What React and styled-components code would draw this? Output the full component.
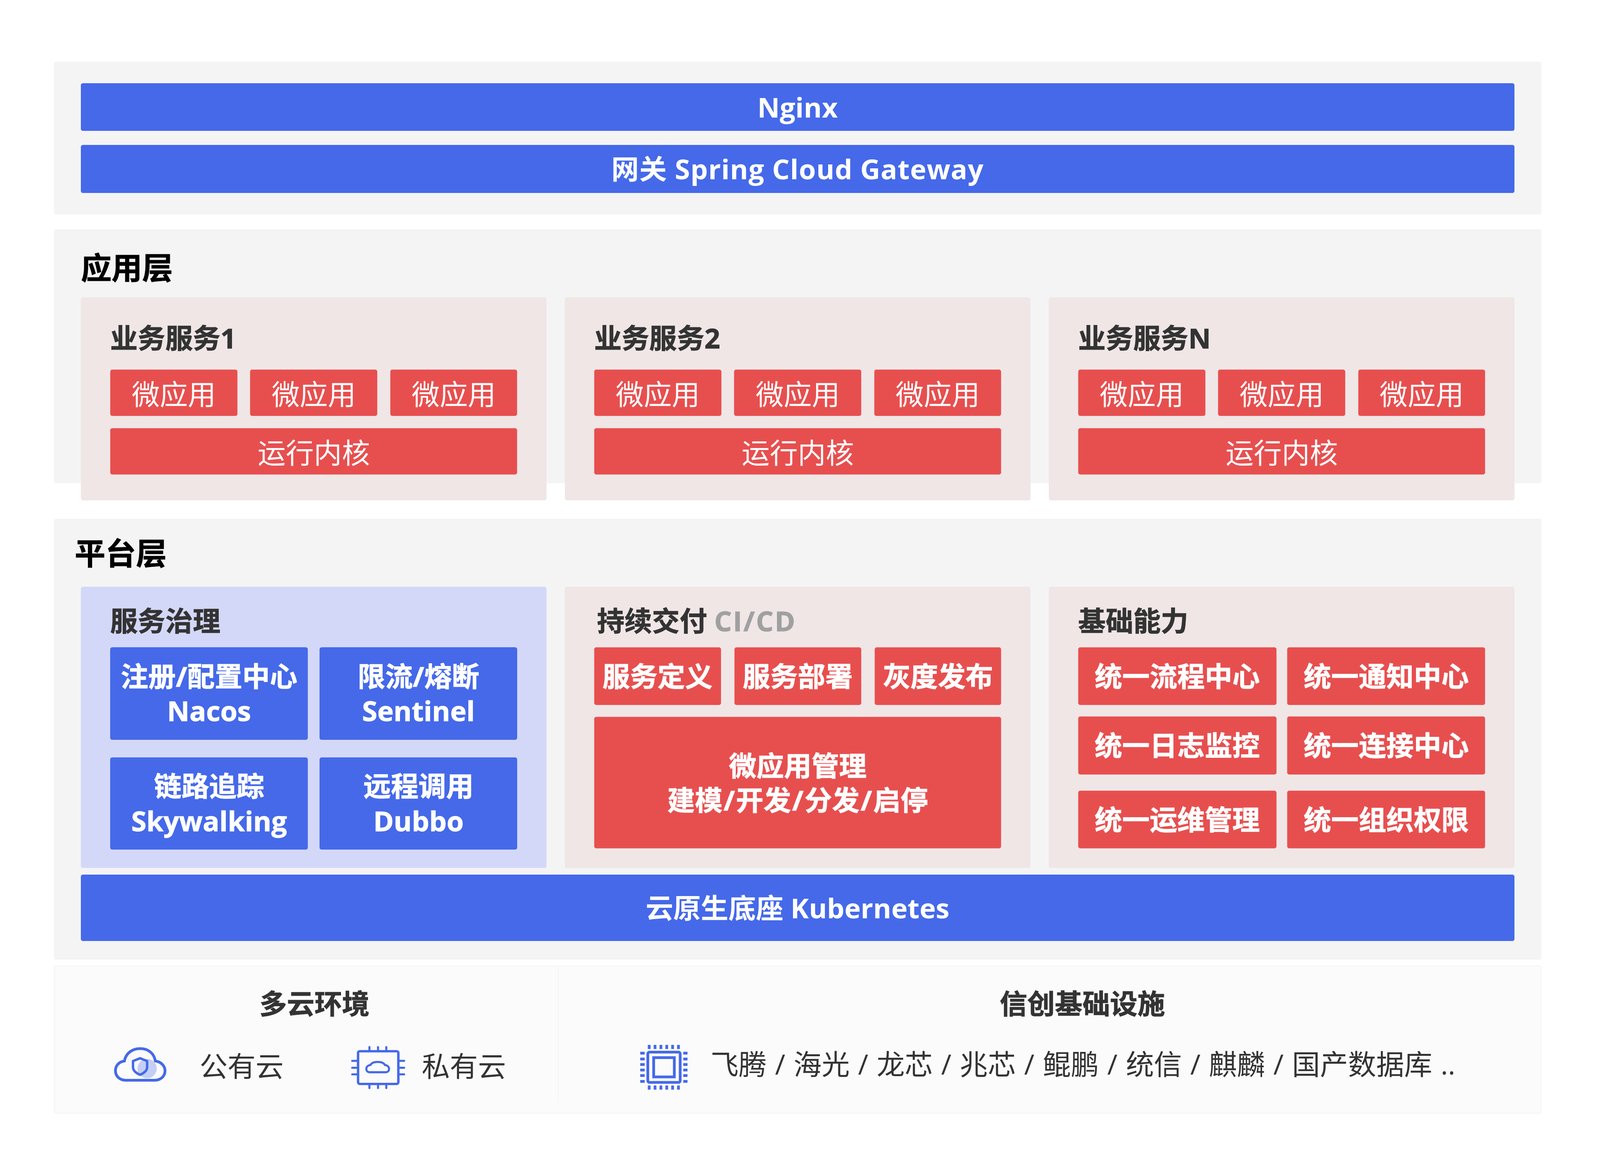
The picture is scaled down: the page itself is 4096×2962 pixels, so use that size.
import React from "react";
import styled, { createGlobalStyle } from "styled-components";

// reference was measured at 4646 wide, the window is 4096
const u = (n) => `${(n * 0.8816).toFixed(2)}px`;

const BLUE = "#4569e9";
const RED = "#e74f4f";
const FONT = `"Open Sans", "Noto Sans CJK SC", sans-serif`;

const GlobalStyle = createGlobalStyle`
  html, body {
    margin: 0;
    padding: 0;
    background: #ffffff;
  }
  * {
    box-sizing: border-box;
  }
`;

function CloudShieldIcon() {
  return (
    <IconSvg $w={152} $h={100} viewBox="0 0 152 100" fill="none">
      <circle cx="96" cy="62" r="28" fill={BLUE} opacity="0.3" />
      <path
        d="M36 96C16 96 4 84 4 68C4 54 14 42 30 40C34 18 52 4 76 4C100 4 116 18 120 40C136 42 148 54 148 68C148 84 136 96 116 96Z"
        stroke={BLUE}
        strokeWidth="8"
      />
      <path d="M75.5 32L96 40V58C96 68 86 76 75.5 80C65 76 55 68 55 58V40Z" stroke={BLUE} strokeWidth="7" strokeLinejoin="round" />
    </IconSvg>
  );
}

function CloudChipIcon() {
  return (
    <IconSvg $w={157} $h={125} $drop={18} viewBox="0 0 157 125" fill="none">
      <rect x="20" y="15" width="117" height="95" rx="5" stroke={BLUE} strokeWidth="7" />
      <path
        d="M54 76C47 76 44 71 44 66C44 60 49 56 56 55C59 49 67 46 77 46C87 46 95 49 98 55C105 56 110 60 110 66C110 71 107 76 100 76Z"
        stroke={BLUE}
        strokeWidth="6"
      />
      <g stroke={BLUE} strokeWidth="6" strokeLinecap="round">
        {[53, 78, 102].map((x) => (
          <path key={x} d={`M${x} 3V12M${x} 113V122`} />
        ))}
        {[43, 63, 82].map((y) => (
          <path key={y} d={`M3 ${y}H16M141 ${y}H154`} />
        ))}
      </g>
    </IconSvg>
  );
}

function CpuIcon() {
  const across = [26, 43, 60, 77, 94, 111];
  const down = [24, 41, 57, 73, 89, 106];
  return (
    <IconSvg $w={137} $h={130} $drop={16} viewBox="0 0 137 130" fill="none">
      <rect x="22" y="21" width="94" height="88" rx="5" stroke={BLUE} strokeWidth="8" />
      <rect x="39" y="37" width="60" height="56" stroke={BLUE} strokeWidth="8" />
      <g fill={BLUE}>
        {across.map((x) => (
          <React.Fragment key={x}>
            <rect x={x - 4} y="0" width="8" height="12" />
            <rect x={x - 4} y="118" width="8" height="12" />
          </React.Fragment>
        ))}
        {down.map((y) => (
          <React.Fragment key={y}>
            <rect x="0" y={y - 4} width="13" height="8" />
            <rect x="125" y={y - 4} width="13" height="8" />
          </React.Fragment>
        ))}
      </g>
    </IconSvg>
  );
}

function ServiceCard({ title }) {
  return (
    <AppCard>
      <AppCardTitle>{title}</AppCardTitle>
      <AppRow>
        <ThinTile>微应用</ThinTile>
        <ThinTile>微应用</ThinTile>
        <ThinTile>微应用</ThinTile>
      </AppRow>
      <ThinTile>运行内核</ThinTile>
    </AppCard>
  );
}

export default function App() {
  return (
    <Page>
      <GlobalStyle />

      <GatewaySection>
        <Bar $h={138}>Nginx</Bar>
        <Bar $h={139} $track={1.2}>网关 Spring Cloud Gateway</Bar>
      </GatewaySection>

      <AppSection>
        <LayerTitle $below={42}>应用层</LayerTitle>
        <CardRow>
          <ServiceCard title="业务服务1" />
          <ServiceCard title="业务服务2" />
          <ServiceCard title="业务服务N" />
        </CardRow>
      </AppSection>

      <PlatformSection>
        <LayerTitle $indent={-18} $below={54}>平台层</LayerTitle>
        <CardRow>
          <PlatformCard $tint="#d4d8f8">
            <CardHeading>服务治理</CardHeading>
            <GovernanceGrid>
              <BlueTile>注册/配置中心<br />Nacos</BlueTile>
              <BlueTile>限流/熔断<br />Sentinel</BlueTile>
              <BlueTile>链路追踪<br />Skywalking</BlueTile>
              <BlueTile>远程调用<br />Dubbo</BlueTile>
            </GovernanceGrid>
          </PlatformCard>

          <PlatformCard>
            <CardHeading $indent={8}>
              持续交付 <Muted>CI/CD</Muted>
            </CardHeading>
            <DeliveryRow>
              <RedTile>服务定义</RedTile>
              <RedTile>服务部署</RedTile>
              <RedTile>灰度发布</RedTile>
            </DeliveryRow>
            <ManageTile>
              <span>
                微应用管理
                <br />
                建模<Slash>/</Slash>开发<Slash>/</Slash>分发<Slash>/</Slash>启停
              </span>
            </ManageTile>
          </PlatformCard>

          <PlatformCard>
            <CardHeading>基础能力</CardHeading>
            <AbilityGrid>
              <RedTile>统一流程中心</RedTile>
              <RedTile>统一通知中心</RedTile>
              <RedTile>统一日志监控</RedTile>
              <RedTile>统一连接中心</RedTile>
              <RedTile>统一运维管理</RedTile>
              <RedTile>统一组织权限</RedTile>
            </AbilityGrid>
          </PlatformCard>
        </CardRow>
        <Bar $h={193}>云原生底座 Kubernetes</Bar>
      </PlatformSection>

      <InfraSection>
        <InfraColumn $w={1463} $divided>
          <InfraTitle $shift={47}>多云环境</InfraTitle>
          <InfraRow $left={172}>
            <CloudShieldIcon />
            <InfraLabel $gap={96}>公有云</InfraLabel>
            <ChipSlot>
              <CloudChipIcon />
            </ChipSlot>
            <InfraLabel $gap={48}>私有云</InfraLabel>
          </InfraRow>
        </InfraColumn>
        <InfraColumn>
          <InfraTitle $shift={190}>信创基础设施</InfraTitle>
          <InfraRow $left={237}>
            <CpuIcon />
            <InfraLabel $gap={67} $lift={12} $spread>飞腾 / 海光 / 龙芯 / 兆芯 / 鲲鹏 / 统信 / 麒麟 / 国产数据库 ..</InfraLabel>
          </InfraRow>
        </InfraColumn>
      </InfraSection>
    </Page>
  );
}

const Page = styled.div`
  width: 4096px;
  height: 2962px;
  padding: ${u(179)} ${u(170)} 0 ${u(157)};
  font-family: ${FONT};
  overflow: hidden;
`;

const Section = styled.section`
  background: #f4f4f5;
  border-radius: ${u(6)};
  padding-left: ${u(78)};
  padding-right: ${u(79)};
`;

const GatewaySection = styled(Section)`
  display: flex;
  flex-direction: column;
  gap: ${u(41)};
  padding-top: ${u(63)};
  padding-bottom: ${u(63)};
`;

const AppSection = styled(Section)`
  height: ${u(737)};
  margin-top: ${u(43)};
  padding-top: ${u(67)};
`;

const PlatformSection = styled(Section)`
  margin-top: ${u(103)};
  padding-top: ${u(56)};
  padding-bottom: ${u(54)};
`;

const LayerTitle = styled.h2`
  height: ${u(88)};
  margin: 0 0 ${(p) => u(p.$below)} ${(p) => u(p.$indent || 0)};
  font-size: ${u(89)};
  line-height: ${u(88)};
  font-weight: 700;
  color: #000000;
  -webkit-text-stroke: 1px #000000;
`;

const CardRow = styled.div`
  display: grid;
  grid-template-columns: repeat(3, 1fr);
  gap: ${u(54)};
`;

const Bar = styled.div`
  display: flex;
  align-items: center;
  justify-content: center;
  height: ${(p) => u(p.$h)};
  background: ${BLUE};
  border-radius: ${u(6)};
  color: #ffffff;
  font-size: ${u(80)};
  line-height: 1.2;
  font-weight: 700;
  letter-spacing: ${(p) => u(p.$track || 0)};
  white-space: pre;

  ${CardRow} + & {
    margin-top: ${u(19)};
  }
`;

const AppCard = styled.div`
  display: flex;
  flex-direction: column;
  height: ${u(590)};
  padding: ${u(74)} ${u(84)} 0 ${u(85)};
  background: #f0e6e6;
  border-radius: ${u(6)};
`;

const AppCardTitle = styled.h3`
  height: ${u(90)};
  margin: 0 0 ${u(46)};
  font-size: ${u(80)};
  line-height: ${u(90)};
  font-weight: 700;
  color: #333333;
  -webkit-text-stroke: 1px #333333;
`;

const AppRow = styled.div`
  display: grid;
  grid-template-columns: repeat(3, 1fr);
  gap: ${u(37)};
  margin-bottom: ${u(35)};
`;

const ThinTile = styled.div`
  display: flex;
  align-items: center;
  justify-content: center;
  height: ${u(135)};
  background: ${RED};
  border: 1px solid #ec6d6d;
  border-radius: ${u(6)};
  color: #ffffff;
  font-size: ${u(81.5)};
  font-weight: 400;
`;

const PlatformCard = styled.div`
  height: ${u(817)};
  padding: ${u(59)} ${u(84)} 0 ${u(85)};
  background: ${(p) => p.$tint || "#f0e6e6"};
  border-radius: ${u(6)};
`;

const CardHeading = styled.h3`
  height: ${u(80)};
  margin: 0 0 ${u(37)} ${(p) => u(p.$indent || 0)};
  font-size: ${u(80)};
  line-height: ${u(80)};
  font-weight: 700;
  color: #333333;
  -webkit-text-stroke: 1px currentColor;
`;

const Muted = styled.span`
  color: #a0a0a0;
  letter-spacing: ${u(3.5)};
`;

const GovernanceGrid = styled.div`
  display: grid;
  grid-template-columns: repeat(2, 1fr);
  grid-auto-rows: ${u(268)};
  column-gap: ${u(34)};
  row-gap: ${u(51)};
`;

const Tile = styled.div`
  display: flex;
  align-items: center;
  justify-content: center;
  text-align: center;
  border-radius: ${u(6)};
  color: #ffffff;
  font-size: ${u(80)};
  font-weight: 700;
  line-height: ${u(100)};
  white-space: nowrap;
  -webkit-text-stroke: 1px #ffffff;
`;

const BlueTile = styled(Tile)`
  background: ${BLUE};
`;

const RedTile = styled(Tile)`
  height: ${u(168)};
  background: ${RED};
  border: 1px solid #ec6d6d;
`;

const DeliveryRow = styled.div`
  display: grid;
  grid-template-columns: repeat(3, 1fr);
  gap: ${u(39)};
  margin-bottom: ${u(34)};
`;

const ManageTile = styled(Tile)`
  height: ${u(382)};
  background: ${RED};
  border: 1px solid #ec6d6d;
`;

const Slash = styled.span`
  margin: 0 ${u(3)};
`;

const AbilityGrid = styled.div`
  display: grid;
  grid-template-columns: repeat(2, 1fr);
  column-gap: ${u(31)};
  row-gap: ${u(33)};

  & > :nth-child(n + 5) {
    margin-top: ${u(14)};
  }
`;

const InfraSection = styled.section`
  display: flex;
  height: ${u(430)};
  margin-top: ${u(17)};
  background: #fbfbfb;
  border: ${u(3)} solid #f3f3f3;
  border-radius: ${u(8)};
`;

const InfraColumn = styled.div`
  flex: ${(p) => (p.$w ? `0 0 ${u(p.$w)}` : "1")};
  height: ${u(395)};
  border-right: ${(p) => (p.$divided ? `${u(3)} solid #f3f3f3` : "none")};
  padding-top: ${u(64)};
`;

const InfraTitle = styled.h3`
  height: ${u(90)};
  margin: 0 0 ${u(66)};
  padding-left: ${(p) => u(p.$shift)};
  text-align: center;
  font-size: ${u(80)};
  line-height: ${u(90)};
  font-weight: 700;
  color: #333333;
  -webkit-text-stroke: 1px #333333;
`;

const InfraRow = styled.div`
  display: flex;
  align-items: center;
  height: ${u(130)};
  padding-left: ${(p) => u(p.$left)};
`;

const IconSvg = styled.svg`
  flex: none;
  width: ${(p) => u(p.$w)};
  height: ${(p) => u(p.$h)};
  margin-top: ${(p) => u(p.$drop || 0)};
`;

const ChipSlot = styled.div`
  display: flex;
  margin-left: ${u(196)};
`;

const InfraLabel = styled.span`
  margin-left: ${(p) => u(p.$gap)};
  margin-bottom: ${(p) => u(p.$lift || 0)};
  font-size: ${u(81.5)};
  font-weight: 400;
  color: #333333;
  white-space: nowrap;
  word-spacing: ${(p) => (p.$spread ? u(3) : "0")};
`;
